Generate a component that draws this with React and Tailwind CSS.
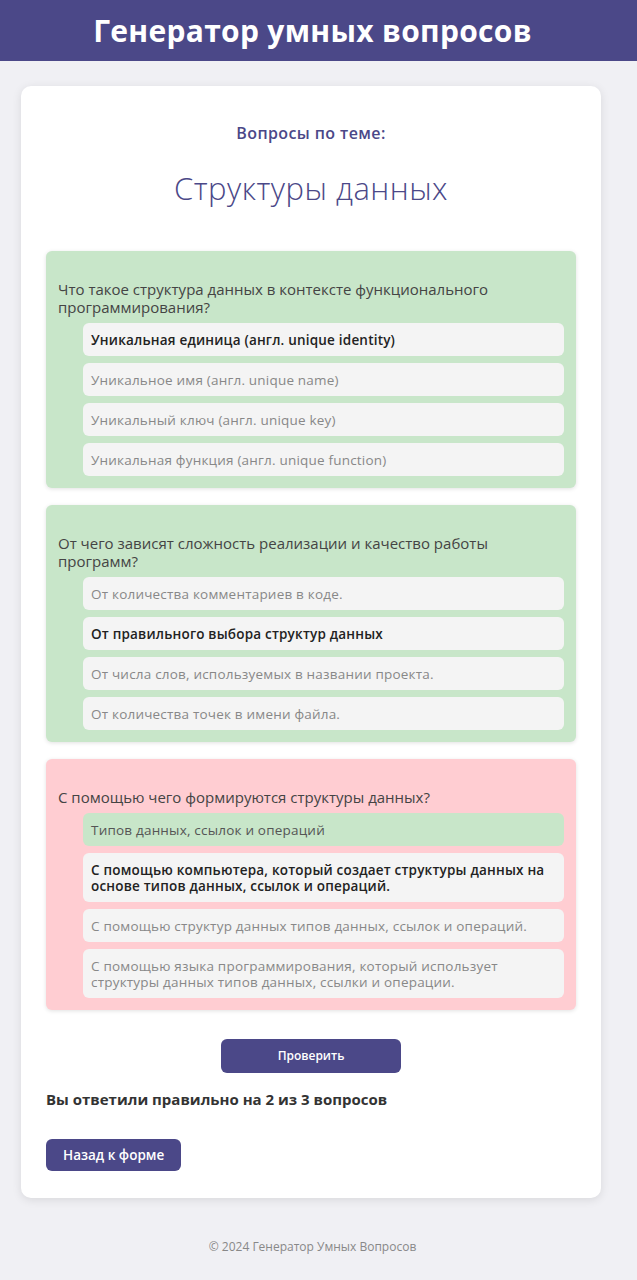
export default function App() {
  const font = { fontFamily: '"Open Sans", "Noto Sans", sans-serif' };
  const questions = [
    {
      bg: "bg-[#c8e6c9]",
      q: "Что такое структура данных в контексте функционального программирования?",
      opts: [
        { t: "Уникальная единица (англ. unique identity)", sel: true },
        { t: "Уникальное имя (англ. unique name)" },
        { t: "Уникальный ключ (англ. unique key)" },
        { t: "Уникальная функция (англ. unique function)" },
      ],
    },
    {
      bg: "bg-[#c8e6c9]",
      q: "От чего зависят сложность реализации и качество работы программ?",
      opts: [
        { t: "От количества комментариев в коде." },
        { t: "От правильного выбора структур данных", sel: true },
        { t: "От числа слов, используемых в названии проекта." },
        { t: "От количества точек в имени файла." },
      ],
    },
    {
      bg: "bg-[#ffcdd2]",
      q: "С помощью чего формируются структуры данных?",
      opts: [
        { t: "Типов данных, ссылок и операций", correct: true },
        { t: "С помощью компьютера, который создает структуры данных на основе типов данных, ссылок и операций.", sel: true },
        { t: "С помощью структур данных типов данных, ссылок и операций." },
        { t: "С помощью языка программирования, который использует структуры данных типов данных, ссылки и операции." },
      ],
    },
  ];

  return (
    <div style={font} className="min-h-[1280px] bg-[#f0f0f4] flex flex-col">
      <header className="h-[61px] bg-[#4b4888] flex items-center justify-center">
        <h1 className="text-white text-[30px] font-bold tracking-[0.3px] pr-[12px]">Генератор умных вопросов</h1>
      </header>

      <main className="px-[21px] pt-[25px] w-[622px]">
        <div className="bg-white rounded-[10px] shadow-[0_2px_10px_rgba(0,0,0,0.1)] px-[25px] pt-[36px] pb-[27px]">
          <h2 className="text-center text-[#4b4888] text-[16px] font-semibold leading-[22px] tracking-[0.4px]">Вопросы по теме:</h2>
          <h3 className="text-center text-[#4b4888] text-[31px] font-light leading-[38px] mt-[25px] tracking-[0.5px]">Структуры данных</h3>

          <div className="mt-[44px] flex flex-col gap-[17px]">
            {questions.map((q, i) => (
              <div key={i} className={`${q.bg} rounded-[6px] shadow-[0_1px_4px_rgba(0,0,0,0.12)] pt-[29px] pb-[12px] pl-[12px] pr-[12px]`}>
                <p className="text-[#444] text-[15px] leading-[18px] pr-[12px]">{q.q}</p>
                <div className="mt-[7px] ml-[25px] flex flex-col gap-[7px]">
                  {q.opts.map((o, j) => (
                    <div
                      key={j}
                      className={`${o.correct ? "bg-[#c8e6c9] text-[#555]" : "bg-[#f4f4f4]"} ${o.sel ? "font-semibold text-[#222]" : o.correct ? "" : "text-[#888]"} rounded-[6px] px-[8px] py-[8.5px] text-[13.5px] leading-[16px] tracking-[0.2px]`}
                    >
                      {o.t}
                    </div>
                  ))}
                </div>
              </div>
            ))}
          </div>

          <div className="flex justify-center mt-[29px]">
            <button className="w-[180px] h-[34px] bg-[#4b4888] text-white text-[12px] font-semibold rounded-[6px]">Проверить</button>
          </div>
          <p className="mt-[16px] text-[15px] font-bold text-[#333] leading-[20px]">Вы ответили правильно на 2 из 3 вопросов</p>
          <button className="mt-[30px] h-[32px] px-[17px] bg-[#4b4888] text-white text-[13.5px] font-semibold rounded-[6px]">Назад к форме</button>
        </div>
      </main>

      <footer className="text-center text-[12px] text-[#888] mt-[40px] pr-[12px]">© 2024 Генератор Умных Вопросов</footer>
    </div>
  );
}
